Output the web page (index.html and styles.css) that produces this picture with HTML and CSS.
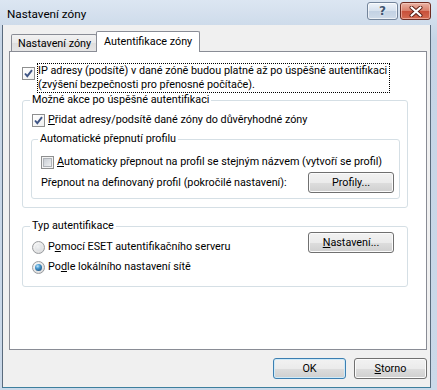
FILE: index.html
```html
<!DOCTYPE html>
<html>
<head>
  <meta charset="UTF-8">
  <meta name="viewport" content="width=device-width, initial-scale=1.0">

  <link rel="stylesheet" href="styles.css">

</head>
<body>

<div class="window">

    <div class="titlebar">
        <span class="title">Nastavení zóny</span>
        <div class="caption-buttons">
            <span class="cap-btn help">?</span>
            <span class="cap-btn close">
                <svg width="14" height="11" viewBox="0 0 14 11">
                    <path d="M2.5 1.5 L11.5 9.5 M11.5 1.5 L2.5 9.5" stroke="#5a1d14" stroke-width="4" stroke-linecap="round"/>
                    <path d="M2.5 1.5 L11.5 9.5 M11.5 1.5 L2.5 9.5" stroke="#ffffff" stroke-width="2.2" stroke-linecap="round"/>
                </svg>
            </span>
        </div>
    </div>

    <div class="client">

        <div class="tabs">
            <div class="tab">Nastavení zóny</div>
            <div class="tab active">Autentifikace zóny</div>
        </div>

        <div class="tab-panel">

            <div class="row main-row">
                <span class="check checked">
                    <svg width="11" height="11" viewBox="0 0 11 11"><path d="M2 5.5 L4.3 8.2 L9 2.2" stroke="#3f5585" stroke-width="1.9" fill="none"/></svg>
                </span>
                <span class="focus-label">IP adresy (podsítě) v dané zóně budou platné až po úspěšné autentifikaci<br>(zvýšení bezpečnosti pro přenosné počítače).</span>
            </div>

            <fieldset class="group group-actions">
                <legend>Možné akce po úspěšné autentifikaci</legend>

                <div class="row option">
                    <span class="check checked">
                        <svg width="11" height="11" viewBox="0 0 11 11"><path d="M2 5.5 L4.3 8.2 L9 2.2" stroke="#3f5585" stroke-width="1.9" fill="none"/></svg>
                    </span>
                    <span><span class="u">P</span>řidat adresy/podsítě dané zóny do důvěryhodné zóny</span>
                </div>

                <fieldset class="group group-profile">
                    <legend>Automatické přepnutí profilu</legend>

                    <div class="row option">
                        <span class="check"></span>
                        <span><span class="u">A</span>utomaticky přepnout na profil se stejným názvem (vytvoří se profil)</span>
                    </div>

                    <div class="row profile-row">
                        <span>Přepnout na definovaný profil (pokročilé nastavení):</span>
                        <button class="btn btn-side">Profily...</button>
                    </div>
                </fieldset>
            </fieldset>

            <fieldset class="group group-type">
                <legend>Typ autentifikace</legend>

                <div class="type-body">
                    <div class="radios">
                        <div class="row option">
                            <span class="radio"></span>
                            <span>P<span class="u">o</span>mocí ESET autentifikačního serveru</span>
                        </div>
                        <div class="row option">
                            <span class="radio selected"></span>
                            <span>Po<span class="u">d</span>le lokálního nastavení sítě</span>
                        </div>
                    </div>
                    <button class="btn btn-side btn-raised"><span class="u">N</span>astavení...</button>
                </div>
            </fieldset>

        </div>

        <div class="footer">
            <button class="btn btn-dialog btn-default">OK</button>
            <button class="btn btn-dialog"><span class="u">S</span>torno</button>
        </div>

    </div>

</div>

</body>
</html>
```
FILE: styles.css
```css
body {
    font-family: Roboto, "Noto Sans", sans-serif;
    font-size: 10.8px;
    line-height: 14px;
    color: #000;
    margin: 0;
    width: 437px;
    height: 390px;
    background: #ccdaea;
    overflow: hidden;
}

.window {
    box-sizing: border-box;
    height: 390px;
    padding: 0 6px 2px 2px;
    display: flex;
    flex-direction: column;
    background: linear-gradient(#dce6f2, #c6d5e6 40px, #cbd9e9);
}

/* title bar */

.titlebar {
    height: 25px;
    display: flex;
    justify-content: space-between;
    align-items: flex-start;
}

.title {
    font-size: 11.7px;
    padding: 7px 0 0 5px;
    line-height: 14px;
}

.caption-buttons {
    display: flex;
    gap: 2px;
    margin-top: 2px;
}

.cap-btn {
    box-sizing: border-box;
    width: 31px;
    height: 18px;
    border-radius: 3px;
    display: flex;
    align-items: center;
    justify-content: center;
}

.help {
    border: 1px solid #73849a;
    background: linear-gradient(#eef3f9, #d6e1ee 50%, #c2d1e3 51%, #cfdbe9);
    box-shadow: inset 0 0 0 1px rgba(255, 255, 255, 0.6);
    color: #40556f;
    font-family: "DejaVu Sans", sans-serif;
    font-weight: bold;
    font-size: 12px;
    text-shadow: 0 0 2px #fff;
}

.close {
    border: 1px solid #6e2c22;
    background: linear-gradient(#eab2a4, #d9806c 48%, #c8503a 52%, #d46b52);
    box-shadow: inset 0 0 0 1px rgba(255, 220, 210, 0.5);
}

/* client area */

.client {
    flex: 1;
    display: flex;
    flex-direction: column;
    background: #f0f0f0;
    border: 1px solid #5a6b7d;
    border-top: 0;
    border-bottom-color: #3d7f9e;
    padding: 6px 3px 8px 6px;
}

.tabs {
    display: flex;
    align-items: flex-end;
    height: 20px;
    margin-left: 2px;
}

.tab {
    box-sizing: border-box;
    border: 1px solid #898c95;
    border-bottom: 0;
    border-radius: 2px 2px 0 0;
    display: flex;
    align-items: center;
}

.tab:not(.active) {
    width: 86px;
    height: 17px;
    padding: 1px 0 0 6px;
    background: linear-gradient(#f2f2f2, #e9e9e9 50%, #dedede 51%, #e6e6e6);
}

.tab.active {
    position: relative;
    z-index: 1;
    width: 104px;
    height: 21px;
    margin: 0 0 -1px -1px;
    padding: 0 0 1px 7px;
    background: #fff;
}

.tab-panel {
    box-sizing: border-box;
    height: 299px;
    border: 1px solid #898c95;
    background: #fff;
    padding: 11px 0 0 12px;
}

.row {
    display: flex;
    align-items: center;
}

.main-row {
    align-items: flex-start;
}

.main-row .check {
    margin: 4px 2px 0 0;
}

.focus-label {
    border: 1px dotted #000;
    padding-right: 2px;
}

.u {
    text-decoration: underline;
}

/* checkboxes and radios */

.check {
    box-sizing: border-box;
    width: 13px;
    height: 13px;
    flex: none;
    border: 1px solid #8e8f8f;
    background: #f4f4f4;
    margin-right: 3px;
    display: flex;
    align-items: center;
    justify-content: center;
}

.check:not(.checked)::before {
    content: "";
    width: 7px;
    height: 7px;
    border: 1px solid #b0b4b9;
    background: linear-gradient(135deg, #c9cdd3, #eef0f2);
}

.check.checked {
    background: linear-gradient(135deg, #ffffff, #f0f0f0);
}

.radio {
    box-sizing: border-box;
    width: 13px;
    height: 13px;
    flex: none;
    border-radius: 50%;
    border: 1px solid #999c9f;
    background: radial-gradient(circle at 40% 35%, #ffffff, #e4e4e4 60%, #cfd1d4);
    margin-right: 3px;
    display: flex;
    align-items: center;
    justify-content: center;
}

.radio::before {
    content: "";
    width: 7px;
    height: 7px;
    border-radius: 50%;
    background: radial-gradient(circle at 40% 35%, #f2f3f4, #d4d7db);
}

.radio.selected::before {
    background: radial-gradient(circle at 38% 32%, #bfe6fb 0, #4a9ad0 35%, #1c4e7c 85%);
}

/* group boxes */

.group {
    box-sizing: border-box;
    border: 1px solid #d5dfe5;
    border-radius: 3px;
    margin: 0;
    min-width: 0;
}

.group legend {
    padding: 0 2px;
    line-height: 14px;
}

.group-actions {
    width: 386px;
    padding: 6px 7px 8px 7px;
}

.group-actions > .option {
    margin-left: 2px;
}

.group-profile {
    width: 369px;
    margin: 5px 0 0 1px;
    padding: 9px 5px 5px 6px;
}

.group-profile .row {
    margin-left: 3px;
}

.profile-row {
    margin-top: 3px;
    justify-content: space-between;
}

.group-type {
    width: 386px;
    margin-top: 11px;
    padding: 0 13px 12px 7px;
}

.type-body {
    display: flex;
    justify-content: space-between;
    align-items: flex-start;
}

.radios {
    display: flex;
    flex-direction: column;
    gap: 6px;
    padding-top: 7px;
    margin-left: 2px;
}

.btn-raised {
    margin-top: -1px;
}

/* buttons */

.btn {
    box-sizing: border-box;
    height: 21px;
    font-family: inherit;
    font-size: inherit;
    color: #000;
    border: 1px solid #707070;
    border-radius: 3px;
    background: linear-gradient(#f2f2f2, #ebebeb 50%, #dddddd 51%, #cfcfcf);
    box-shadow: inset 0 0 0 1px #fbfbfb;
    padding: 0;
    line-height: 14px;
}

.btn-side {
    width: 86px;
}

.footer {
    display: flex;
    justify-content: flex-end;
    gap: 8px;
    margin-top: 8px;
}

.btn-dialog {
    width: 73px;
}

.btn-default {
    border-color: #3c7fb1;
    box-shadow: inset 0 0 0 1px #cfeaf8;
}
```
